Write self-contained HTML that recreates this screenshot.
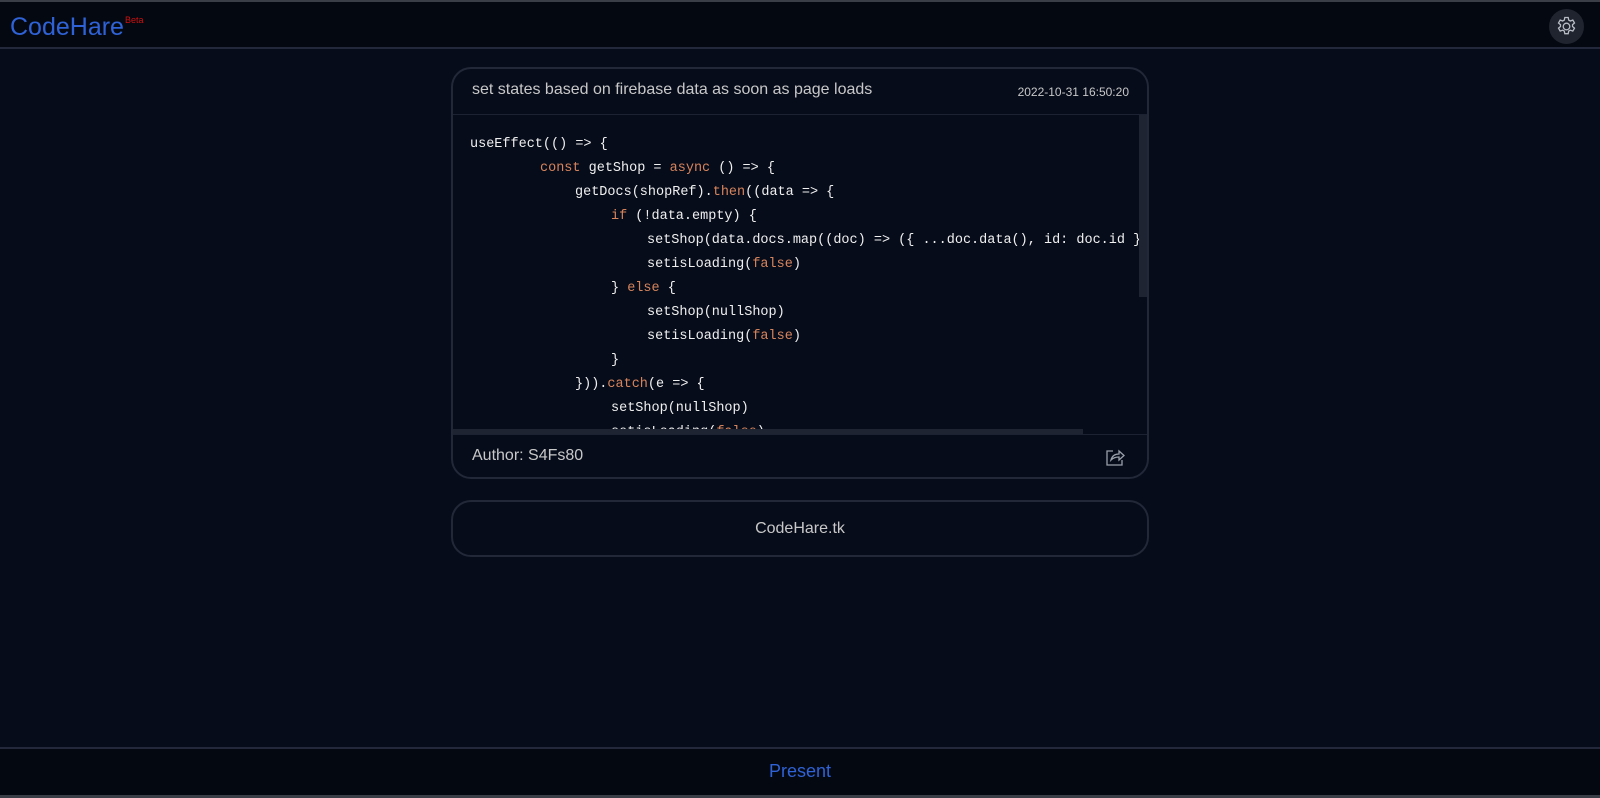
<!DOCTYPE html>
<html><head><meta charset="utf-8"><style>
*{box-sizing:border-box;margin:0;padding:0}
body{width:1600px;height:798px;background:#060c1a;font-family:"Liberation Sans",sans-serif;position:relative;overflow:hidden}
.top{position:absolute;left:0;top:0;width:1600px;height:49px;background:#040810;border-top:2px solid #3a3e46;border-bottom:2px solid #23283a}
.logo{position:absolute;left:10px;top:11px;font-size:25px;color:#2f62d6;white-space:nowrap}
.logo span{font-size:9px;color:#d01010;position:relative;top:-12px;margin-left:1px}
.gear{position:absolute;left:1549px;top:7px;width:35px;height:35px;border-radius:50%;background:#20242f}
.card{position:absolute;left:451px;top:67px;width:698px;height:412px;border:2px solid #232838;border-radius:20px;overflow:hidden}
.ch{height:46px;border-bottom:1px solid #1d2233;position:relative}
.title{position:absolute;left:19px;top:12px;font-size:16px;color:#c8c8c8}
.date{position:absolute;right:18px;top:16px;font-size:12px;color:#c8c8c8}
.code{position:relative;height:319px;overflow:hidden;font-family:"Liberation Mono",monospace;font-size:13.5px;line-height:24px;color:#f0f0f0;padding:18px 0 0 17px;white-space:pre}
.code .l{height:24px}
.k{color:#d7845c}
.vs{position:absolute;right:0;top:0;width:8px;height:182px;background:#1f2432}
.hs{position:absolute;left:0;bottom:0;width:630px;height:5px;background:#1f2432}
.cf{border-top:1px solid #1d2233;height:47px;position:relative}
.author{position:absolute;left:19px;top:12px;font-size:16px;color:#c8c8c8}
.card2{position:absolute;left:451px;top:500px;width:698px;height:57px;border:2px solid #232838;border-radius:20px;text-align:center;font-size:16px;color:#c8c8c8;line-height:53px}
.foot{position:absolute;left:0;top:747px;width:1600px;height:51px;background:#040810;border-top:2px solid #23283a;border-bottom:3px solid #3a3e46;text-align:center;color:#2f62d6;font-size:18px;line-height:44px}
</style></head><body>
<div class="top"><div class="logo">CodeHare<span>Beta</span></div>
<div class="gear"><svg width="35" height="35" viewBox="0 0 35 35"><g fill="none" stroke="#b8bcc4" stroke-width="1.3"><path d="M15.8 8.5h3.4l.5 2.6 1.6.9 2.5-.9 1.7 2.9-2 1.7v1.8l2 1.7-1.7 2.9-2.5-.9-1.6.9-.5 2.6h-3.4l-.5-2.6-1.6-.9-2.5.9-1.7-2.9 2-1.7v-1.8l-2-1.7 1.7-2.9 2.5.9 1.6-.9z"/><circle cx="17.5" cy="17.5" r="3.3"/></g></svg></div></div>
<div class="card">
<div class="ch"><div class="title">set states based on firebase data as soon as page loads</div><div class="date">2022-10-31 16:50:20</div></div>
<div class="code"><div class="l">useEffect(() =&gt; {</div><div class="l" style="padding-left:70px"><span class="k">const</span> getShop = <span class="k">async</span> () =&gt; {</div><div class="l" style="padding-left:105px">getDocs(shopRef).<span class="k">then</span>((data =&gt; {</div><div class="l" style="padding-left:141px"><span class="k">if</span> (!data.empty) {</div><div class="l" style="padding-left:177px">setShop(data.docs.map((doc) =&gt; ({ ...doc.data(), id: doc.id })))</div><div class="l" style="padding-left:177px">setisLoading(<span class="k">false</span>)</div><div class="l" style="padding-left:141px">} <span class="k">else</span> {</div><div class="l" style="padding-left:177px">setShop(nullShop)</div><div class="l" style="padding-left:177px">setisLoading(<span class="k">false</span>)</div><div class="l" style="padding-left:141px">}</div><div class="l" style="padding-left:105px">})).<span class="k">catch</span>(e =&gt; {</div><div class="l" style="padding-left:141px">setShop(nullShop)</div><div class="l" style="padding-left:141px">setisLoading(<span class="k">false</span>)</div>
<div class="vs"></div><div class="hs"></div></div>
<div class="cf"><div class="author">Author: S4Fs80</div>
<svg style="position:absolute;left:652px;top:12px" width="20" height="20" viewBox="0 0 20 20"><g fill="none" stroke="#9aa0aa" stroke-width="1.3"><path d="M8 4H2v14h15v-5"/><path d="M6 13c1-4 4-6 8-6V4l5 4.5-5 4.5v-3c-3 0-6 1-8 3z"/></g></svg></div>
</div>
<div class="card2">CodeHare.tk</div>
<div class="foot">Present</div>
</body></html>
